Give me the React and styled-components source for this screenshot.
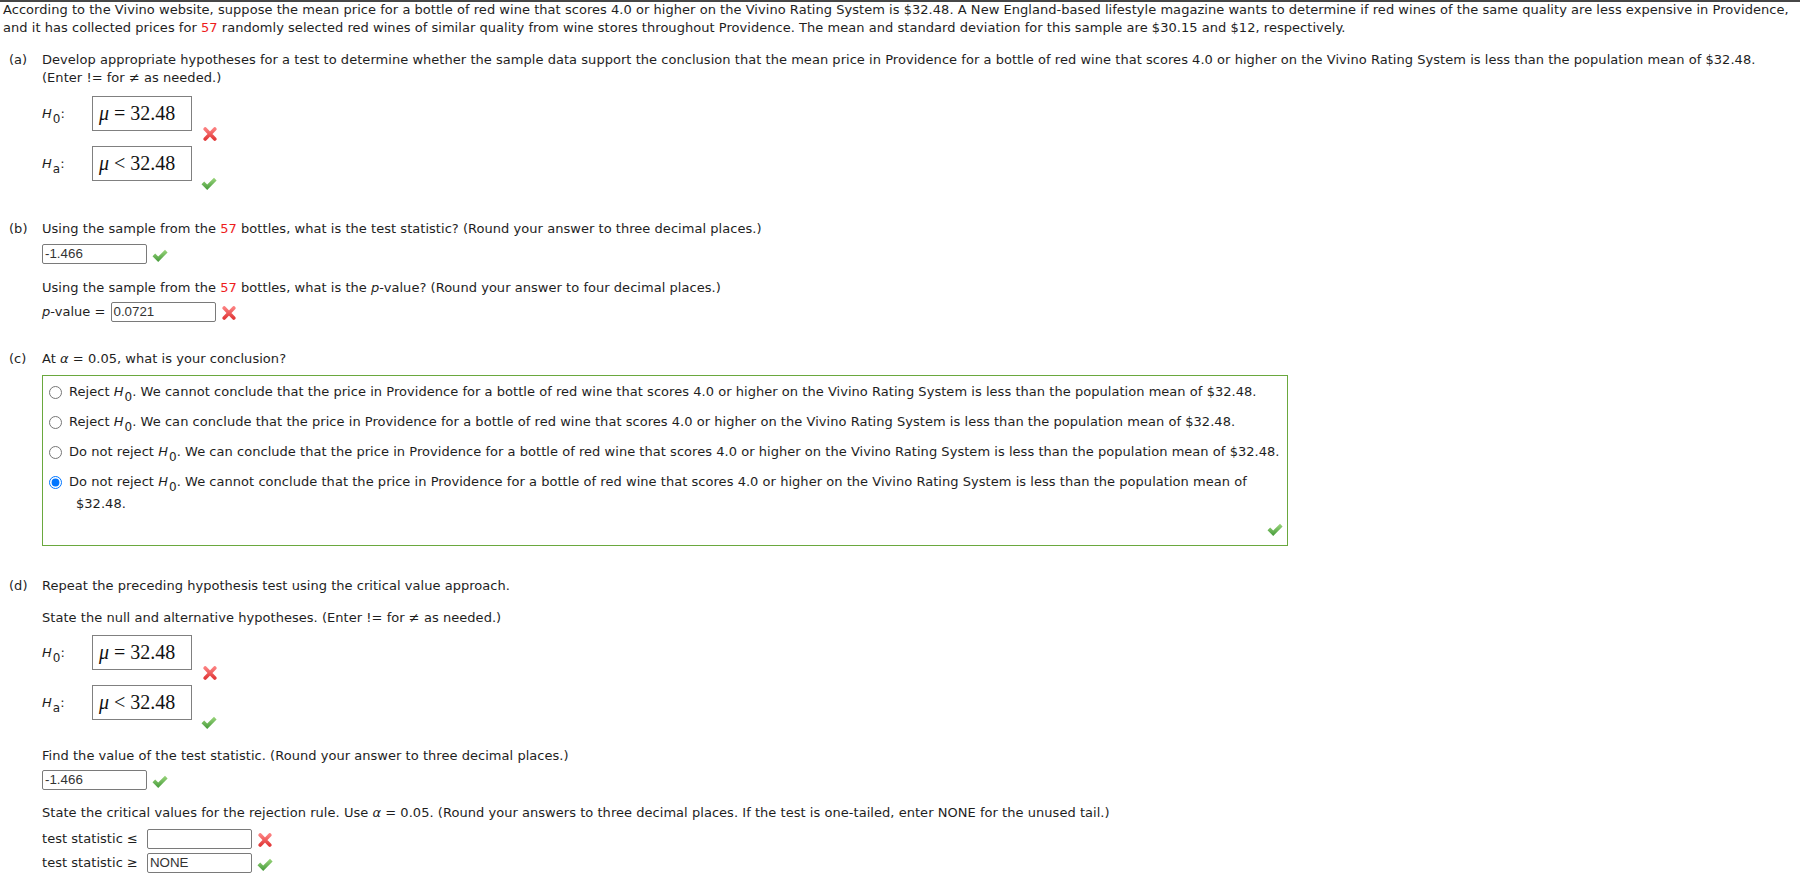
import React from 'react';
import styled, { createGlobalStyle } from 'styled-components';

const GlobalStyle = createGlobalStyle`
  html, body {
    margin: 0;
    padding: 0;
    background: #fff;
  }
  body {
    font-family: "DejaVu Sans", Verdana, sans-serif;
    font-size: 13px;
    letter-spacing: 0.04px;
    color: #1e1e1e;
  }
`;

const TopShade = styled.div`
  position: fixed;
  top: 0;
  left: 0;
  right: 0;
  height: 2px;
  background: #474747;
`;

const Page = styled.div`
  padding: 1px 3px 20px;
`;

const Intro = styled.p`
  margin: 0;
  line-height: 17.5px;
  white-space: nowrap;
`;

const Red = styled.span`
  color: #ee1c1c;
`;

const Section = styled.section`
  display: grid;
  grid-template-columns: 33px 1fr;
  padding-left: 6px;
  margin-top: ${p => p.$top}px;
`;

const PartLabel = styled.div`
  line-height: 18px;
`;

const Body = styled.div`
  display: flex;
  flex-direction: column;
  align-items: flex-start;
`;

const Line = styled.div`
  line-height: 18px;
  white-space: nowrap;
  margin-top: ${p => p.$top || 0}px;
`;

const Var = styled.i`
  font-style: italic;
`;

const Sub = styled.span`
  display: inline-block;
  font-style: normal;
  font-size: 12px;
  text-indent: 0;
  transform: translateY(5px);
  margin-left: 1px;
`;

const HypRow = styled.div`
  display: flex;
  align-items: center;
  margin-top: ${p => p.$top}px;
`;

const HypLabel = styled.div`
  width: 50px;
  line-height: 18px;
`;

const MathBox = styled.div`
  width: 100px;
  height: 35px;
  box-sizing: border-box;
  border: 1px solid #808080;
  display: flex;
  align-items: center;
  padding-left: 6px;
  font-family: "Liberation Serif", "Times New Roman", serif;
  font-size: 20px;
  letter-spacing: 0;
  color: #111;
  white-space: nowrap;
`;

const MathOp = styled.span`
  margin: 0 5px;
`;

const HypMark = styled.span`
  display: inline-flex;
  align-self: flex-end;
  margin-left: ${p => p.$dx}px;
  margin-bottom: -10px;
`;

const InputRow = styled.div`
  display: flex;
  align-items: center;
  margin-top: ${p => p.$top}px;
  line-height: 18px;
  white-space: nowrap;
`;

const RowLabel = styled.span`
  margin-right: ${p => p.$gap}px;
`;

const Answer = styled.div`
  width: 105px;
  height: 20px;
  box-sizing: border-box;
  border: 1px solid #7a7a7a;
  border-radius: 2px;
  padding: 0 2px;
  font-family: "Liberation Sans", Arial, sans-serif;
  font-size: 13.333px;
  letter-spacing: 0;
  line-height: 18px;
  color: #333;
`;

const InputMark = styled.span`
  display: inline-flex;
  margin-left: ${p => p.$dx}px;
  margin-top: ${p => p.$dy}px;
`;

const ChoiceBox = styled.div`
  width: 1246px;
  box-sizing: border-box;
  border: 1px solid #6aa83e;
  margin-top: 7px;
  padding: 5px 4px 8px 3px;
  display: flex;
  flex-direction: column;
  gap: 8px;
`;

const Choice = styled.label`
  display: flex;
  align-items: flex-start;
  line-height: 22px;
`;

const Radio = styled.input`
  flex: none;
  width: 13px;
  height: 13px;
  margin: 4.5px 7px 0 3px;
`;

const ChoiceText = styled.span`
  padding-left: 7px;
  text-indent: -7px;
  white-space: nowrap;
`;

const BoxFooter = styled.div`
  display: flex;
  justify-content: flex-end;
`;

const Check = () => (
  <svg width="16" height="14" viewBox="0 0 16 14">
    <defs>
      <linearGradient id="chk" x1="0" y1="0" x2="0" y2="1">
        <stop offset="0" stopColor="#9bd67c" />
        <stop offset="1" stopColor="#459a3a" />
      </linearGradient>
    </defs>
    <path d="M0.5 7.3 L3.2 4.6 L6.2 7.6 L13 0.8 L15.6 3.4 L6.2 12.9 Z" fill="url(#chk)" />
  </svg>
);

const Cross = () => (
  <svg width="16" height="14" viewBox="0 0 16 14">
    <defs>
      <linearGradient id="crs" x1="0" y1="0" x2="0" y2="1">
        <stop offset="0" stopColor="#fb7d7d" />
        <stop offset="1" stopColor="#e23b3b" />
      </linearGradient>
    </defs>
    <path d="M3.2 2 L12.8 12 M12.8 2 L3.2 12" stroke="url(#crs)" strokeWidth="3.6" strokeLinecap="round" fill="none" />
  </svg>
);

const H = ({ sub }) => (
  <>
    <Var>H</Var>
    <Sub>{sub}</Sub>
  </>
);

const Hypothesis = ({ sub, op, correct, top }) => (
  <HypRow $top={top}>
    <HypLabel>
      <H sub={sub} />:
    </HypLabel>
    <MathBox>
      <Var>μ</Var>
      <MathOp>{op}</MathOp>32.48
    </MathBox>
    <HypMark $dx={correct ? 9 : 10}>{correct ? <Check /> : <Cross />}</HypMark>
  </HypRow>
);

const CHOICES = [
  { verdict: 'Reject', can: 'cannot' },
  { verdict: 'Reject', can: 'can' },
  { verdict: 'Do not reject', can: 'can' },
  { verdict: 'Do not reject', can: 'cannot', picked: true, wrap: true },
];

const App = () => (
  <>
    <GlobalStyle />
    <TopShade />
    <Page>
      <Intro>
        According to the Vivino website, suppose the mean price for a bottle of red wine that scores 4.0 or higher on the Vivino Rating System is $32.48. A New England-based lifestyle magazine wants to determine if red wines of the same quality are less expensive in Providence,
        <br />
        and it has collected prices for <Red>57</Red> randomly selected red wines of similar quality from wine stores throughout Providence. The mean and standard deviation for this sample are $30.15 and $12, respectively.
      </Intro>

      <Section $top={15}>
        <PartLabel>(a)</PartLabel>
        <Body>
          <Line>
            Develop appropriate hypotheses for a test to determine whether the sample data support the conclusion that the mean price in Providence for a bottle of red wine that scores 4.0 or higher on the Vivino Rating System is less than the population mean of $32.48.
          </Line>
          <Line>(Enter != for ≠ as needed.)</Line>
          <Hypothesis sub="0" op="=" top={9} />
          <Hypothesis sub="a" op="<" correct top={15} />
        </Body>
      </Section>

      <Section $top={39}>
        <PartLabel>(b)</PartLabel>
        <Body>
          <Line>
            Using the sample from the <Red>57</Red> bottles, what is the test statistic? (Round your answer to three decimal places.)
          </Line>
          <InputRow $top={6}>
            <Answer>-1.466</Answer>
            <InputMark $dx={5} $dy={4}><Check /></InputMark>
          </InputRow>
          <Line $top={15}>
            Using the sample from the <Red>57</Red> bottles, what is the <Var>p</Var>-value? (Round your answer to four decimal places.)
          </Line>
          <InputRow $top={5}>
            <RowLabel $gap={5}><Var>p</Var>-value =</RowLabel>
            <Answer>0.0721</Answer>
            <InputMark $dx={5} $dy={1}><Cross /></InputMark>
          </InputRow>
        </Body>
      </Section>

      <Section $top={28}>
        <PartLabel>(c)</PartLabel>
        <Body>
          <Line>
            At <Var>α</Var> = 0.05, what is your conclusion?
          </Line>
          <ChoiceBox>
            {CHOICES.map((c, i) => (
              <Choice key={i}>
                <Radio type="radio" name="concl" defaultChecked={!!c.picked} />
                <ChoiceText>
                  {c.verdict} <H sub="0" />. We {c.can} conclude that the price in Providence for a bottle of red wine that scores 4.0 or higher on the Vivino Rating System is less than the population mean of
                  {c.wrap ? <br /> : ' '}
                  $32.48.
                </ChoiceText>
              </Choice>
            ))}
            <BoxFooter>
              <Check />
            </BoxFooter>
          </ChoiceBox>
        </Body>
      </Section>

      <Section $top={31}>
        <PartLabel>(d)</PartLabel>
        <Body>
          <Line>Repeat the preceding hypothesis test using the critical value approach.</Line>
          <Line $top={14}>State the null and alternative hypotheses. (Enter != for ≠ as needed.)</Line>
          <Hypothesis sub="0" op="=" top={8} />
          <Hypothesis sub="a" op="<" correct top={15} />
          <Line $top={27}>Find the value of the test statistic. (Round your answer to three decimal places.)</Line>
          <InputRow $top={5}>
            <Answer>-1.466</Answer>
            <InputMark $dx={5} $dy={4}><Check /></InputMark>
          </InputRow>
          <Line $top={14}>
            State the critical values for the rejection rule. Use <Var>α</Var> = 0.05. (Round your answers to three decimal places. If the test is one-tailed, enter NONE for the unused tail.)
          </Line>
          <InputRow $top={7}>
            <RowLabel $gap={9}>test statistic ≤</RowLabel>
            <Answer />
            <InputMark $dx={5} $dy={1}><Cross /></InputMark>
          </InputRow>
          <InputRow $top={4}>
            <RowLabel $gap={9}>test statistic ≥</RowLabel>
            <Answer>NONE</Answer>
            <InputMark $dx={5} $dy={4}><Check /></InputMark>
          </InputRow>
        </Body>
      </Section>
    </Page>
  </>
);

export default App;
